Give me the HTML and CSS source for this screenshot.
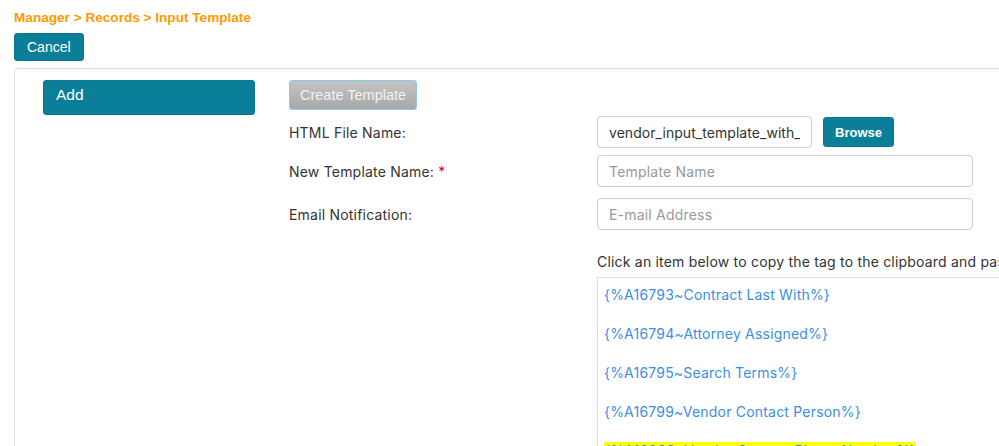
FILE: index.html
```html
<!DOCTYPE html>
<html lang="en">
  <head>
    <meta charset="UTF-8" />
    <meta name="viewport" content="width=device-width, initial-scale=1.0" />
    <title>Input Template</title>
    <link rel="stylesheet" href="styles.css">
  </head>
  <body>
    <div class="page">
      <div class="breadcrumb">Manager &gt; Records &gt; Input Template</div>
      <button class="btn btn-teal cancel">Cancel</button>
      <div class="panel">
        <div class="side">
          <div class="side-item">Add</div>
        </div>
        <div class="form">
          <button class="btn btn-gray">Create Template</button>
          <div class="row row-file">
            <label>HTML File Name:</label>
            <input type="text" class="input input-file" value="vendor_input_template_with_" readonly />
            <button class="btn btn-teal browse">Browse</button>
          </div>
          <div class="row">
            <label>New Template Name: <span class="req">*</span></label>
            <input type="text" class="input" placeholder="Template Name" />
          </div>
          <div class="row">
            <label>Email Notification:</label>
            <input type="text" class="input" placeholder="E-mail Address" />
          </div>
          <div class="tags-wrap">
            <p class="hint">Click an item below to copy the tag to the clipboard and paste it into your HTML template.</p>
            <div class="tags">
              <div class="tag"><span>{%A16793~Contract Last With%}</span></div>
              <div class="tag"><span>{%A16794~Attorney Assigned%}</span></div>
              <div class="tag"><span>{%A16795~Search Terms%}</span></div>
              <div class="tag"><span>{%A16799~Vendor Contact Person%}</span></div>
              <div class="tag active"><span>{%A16800~Vendor Contact Phone Number%}</span></div>
            </div>
          </div>
        </div>
      </div>
    </div>
  </body>
</html>
```

FILE: styles.css
```css
body {
  margin: 0;
  font-family: "Liberation Sans", Arial, sans-serif;
  background: #fff;
  overflow: hidden;
}
.page {
  padding: 10px 0 0 14px;
  width: 1200px;
}
.breadcrumb {
  color: #f90;
  font-weight: bold;
  font-size: 13.6px;
  line-height: 16px;
}
.btn {
  font-family: "Liberation Sans", Arial, sans-serif;
  border-radius: 3px;
  cursor: pointer;
}
.btn-teal {
  background: #0b7f9a;
  color: #fff;
  border: 1px solid #0a7891;
}
.cancel {
  margin-top: 7px;
  height: 28px;
  padding: 0 12px;
  font-size: 14px;
  display: block;
}
.panel {
  margin-top: 7px;
  border: 1px solid #ddd;
  border-radius: 4px;
  display: flex;
  padding: 11px 0 0 28px;
  height: 400px;
}
.side {
  width: 212px;
  margin-right: 34px;
}
.side-item {
  background: #0b7f9a;
  color: #fff;
  font-size: 15.5px;
  height: 35px;
  box-sizing: border-box;
  padding: 5px 12px;
  border-radius: 3px;
  border: 1px solid #0a7891;
}
.form {
  display: flex;
  flex-direction: column;
  align-items: flex-start;
  font-family: Inter, "Liberation Sans", sans-serif;
  font-size: 14px;
  letter-spacing: 0.2px;
  color: #333;
}
.btn-gray {
  height: 30px;
  padding: 0 10px;
  font-size: 14.5px;
  color: #f4f4f4;
  background: linear-gradient(#c4c4c4, #a8a8a8);
  border: 1px solid #8ccbe6;
}
.row {
  display: flex;
  align-items: center;
  margin-top: 7px;
}
.row-file {
  margin-top: 6px;
}
.row + .row + .row {
  margin-top: 11px;
}
.row label {
  width: 308px;
}
.req {
  color: #e00;
}
.input {
  font-family: Inter, "Liberation Sans", sans-serif;
  font-size: 14px;
  letter-spacing: 0.2px;
  color: #333;
  width: 376px;
  height: 32px;
  box-sizing: border-box;
  padding: 0 11px;
  border: 1px solid #ccc;
  border-radius: 4px;
  outline: none;
}
.input::placeholder {
  color: #999;
}
.input-file {
  width: 215px;
  letter-spacing: 0.05px;
}
.browse {
  margin-left: 11px;
  height: 30px;
  padding: 0 11px;
  font-size: 13px;
  font-weight: bold;
  letter-spacing: 0;
}
.tags-wrap {
  margin-left: 308px;
  margin-top: 23px;
}
.hint {
  margin: 0;
  line-height: 18px;
  white-space: nowrap;
}
.tags {
  margin-top: 6px;
  width: 600px;
  height: 200px;
  border: 1px solid #ddd;
  padding-left: 6px;
}
.tag {
  height: 39px;
  box-sizing: border-box;
  padding-top: 7px;
  line-height: 19px;
  color: #3a8ee6;
  cursor: pointer;
}
.tag.active span {
  background: #ffff00;
}
```
